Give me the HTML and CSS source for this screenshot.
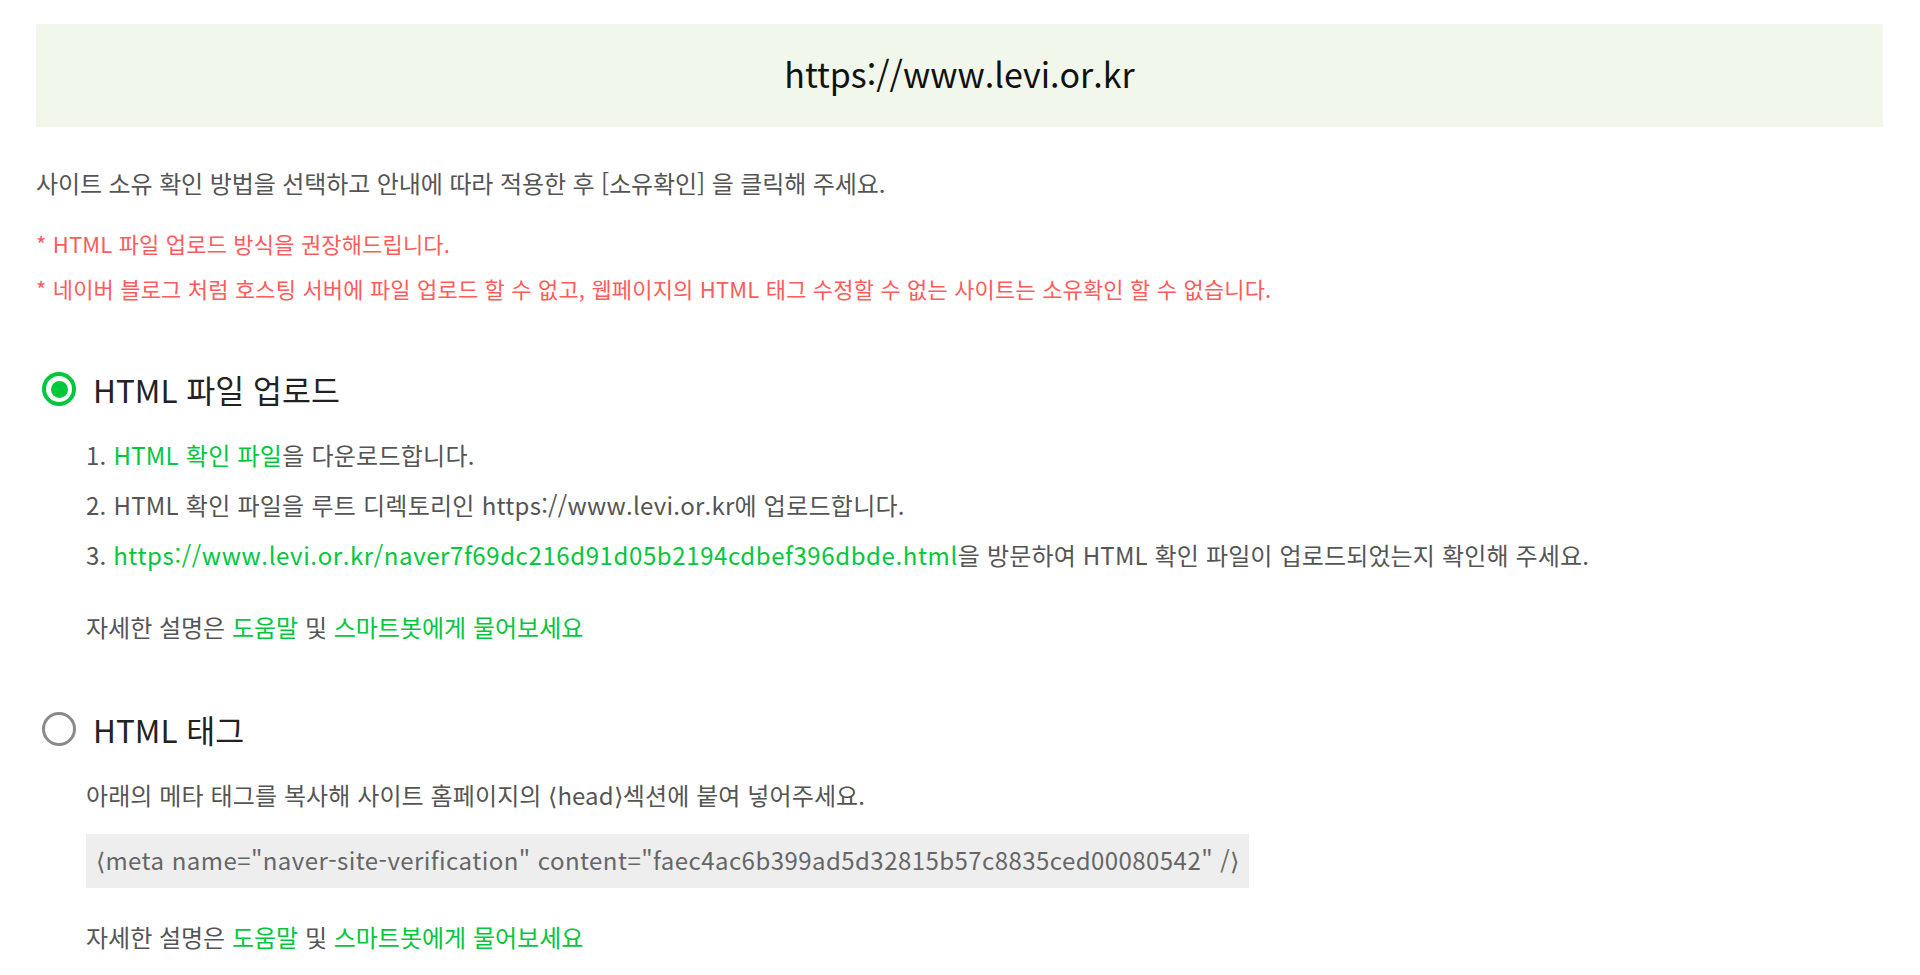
FILE: index.html
```html
<!DOCTYPE html>
<html lang="ko">
<head>
<meta charset="utf-8">
<title>사이트 소유확인</title>
<link rel="stylesheet" href="styles.css">
</head>
<body>
<div class="page">
  <div class="banner">https://www.levi.or.kr</div>
  <p class="intro">사이트 소유 확인 방법을 선택하고 안내에 따라 적용한 후 [소유확인] 을 클릭해 주세요.</p>
  <p class="warn warn-first">* HTML 파일 업로드 방식을 권장해드립니다.</p>
  <p class="warn">* 네이버 블로그 처럼 호스팅 서버에 파일 업로드 할 수 없고, 웹페이지의 HTML 태그 수정할 수 없는 사이트는 소유확인 할 수 없습니다.</p>

  <section class="method method-first">
    <div class="method-head">
      <span class="radio radio-on"></span>
      <span class="method-title">HTML 파일 업로드</span>
    </div>
    <div class="method-body">
      <p class="step step-first">1. <a class="link">HTML 확인 파일</a>을 다운로드합니다.</p>
      <p class="step">2. HTML 확인 파일을 루트 디렉토리인 https://www.levi.or.kr에 업로드합니다.</p>
      <p class="step step-long">3. <a class="link url">https://www.levi.or.kr/naver7f69dc216d91d05b2194cdbef396dbde.html</a>을 방문하여 HTML 확인 파일이 업로드되었는지 확인해 주세요.</p>
      <p class="help help-a">자세한 설명은 <a class="link">도움말</a> 및 <a class="link">스마트봇에게 물어보세요</a></p>
    </div>
  </section>

  <section class="method method-second">
    <div class="method-head">
      <span class="radio"></span>
      <span class="method-title">HTML 태그</span>
    </div>
    <div class="method-body">
      <p class="step step-first desc">아래의 메타 태그를 복사해 사이트 홈페이지의 &lang;head&rang;섹션에 붙여 넣어주세요.</p>
      <div class="code">&lang;meta name="naver-site-verification" content="faec4ac6b399ad5d32815b57c8835ced00080542" /&rang;</div>
      <p class="help help-b">자세한 설명은 <a class="link">도움말</a> 및 <a class="link">스마트봇에게 물어보세요</a></p>
    </div>
  </section>
</div>
</body>
</html>
```

FILE: styles.css
```css
html, body {
  margin: 0;
  padding: 0;
  background: #ffffff;
}

body {
  font-family: "Noto Sans CJK KR", "Noto Sans", sans-serif;
  color: #555555;
}

.page {
  padding: 24px 37px 0 36px;
}

p {
  margin: 0;
}

.banner {
  height: 103px;
  box-sizing: border-box;
  padding-bottom: 5px;
  background: #f1f7ea;
  display: flex;
  align-items: center;
  justify-content: center;
  font-size: 34px;
  color: #111111;
}

.intro {
  margin-top: 41px;
  font-size: 24px;
  line-height: 30px;
  color: #555555;
  letter-spacing: -0.1px;
}

.warn {
  margin-top: 15px;
  font-size: 22px;
  line-height: 30px;
  color: #ff5b5b;
  letter-spacing: 0.16px;
}

.warn-first {
  margin-top: 30px;
}

.method-first {
  margin-top: 66px;
}

.method-second {
  margin-top: 67px;
}

.method-head {
  display: flex;
  align-items: center;
  height: 40px;
  padding-left: 6px;
  gap: 17px;
}

.radio {
  width: 34px;
  height: 34px;
  box-sizing: border-box;
  border-radius: 50%;
  border: 3px solid #8a8a8a;
  display: flex;
  align-items: center;
  justify-content: center;
  flex: none;
}

.radio-on {
  border: 4px solid #00c73c;
}

.radio-on::after {
  content: "";
  width: 17px;
  height: 17px;
  border-radius: 50%;
  background: #00c73c;
}

.method-title {
  font-size: 31.5px;
  line-height: 40px;
  color: #222222;
}

.method-body {
  padding-left: 50px;
}

.step {
  margin-top: 20px;
  font-size: 24px;
  line-height: 30px;
  color: #555555;
  letter-spacing: 0.25px;
}

.step-long {
  letter-spacing: 0.15px;
}

.step-first {
  margin-top: 31px;
}

.desc {
  letter-spacing: 0.1px;
}

.link {
  color: #00c73c;
  text-decoration: none;
}

.url {
  letter-spacing: 0.6px;
}

.help {
  font-size: 24px;
  line-height: 30px;
  color: #555555;
}

.help-a {
  margin-top: 42px;
}

.help-b {
  margin-top: 34px;
}

.code {
  margin-top: 24px;
  display: inline-block;
  height: 54px;
  line-height: 52px;
  padding: 0 9px 2px 10px;
  box-sizing: border-box;
  background: #eeeeee;
  color: #666666;
  font-size: 24px;
  letter-spacing: 0.45px;
}
```
